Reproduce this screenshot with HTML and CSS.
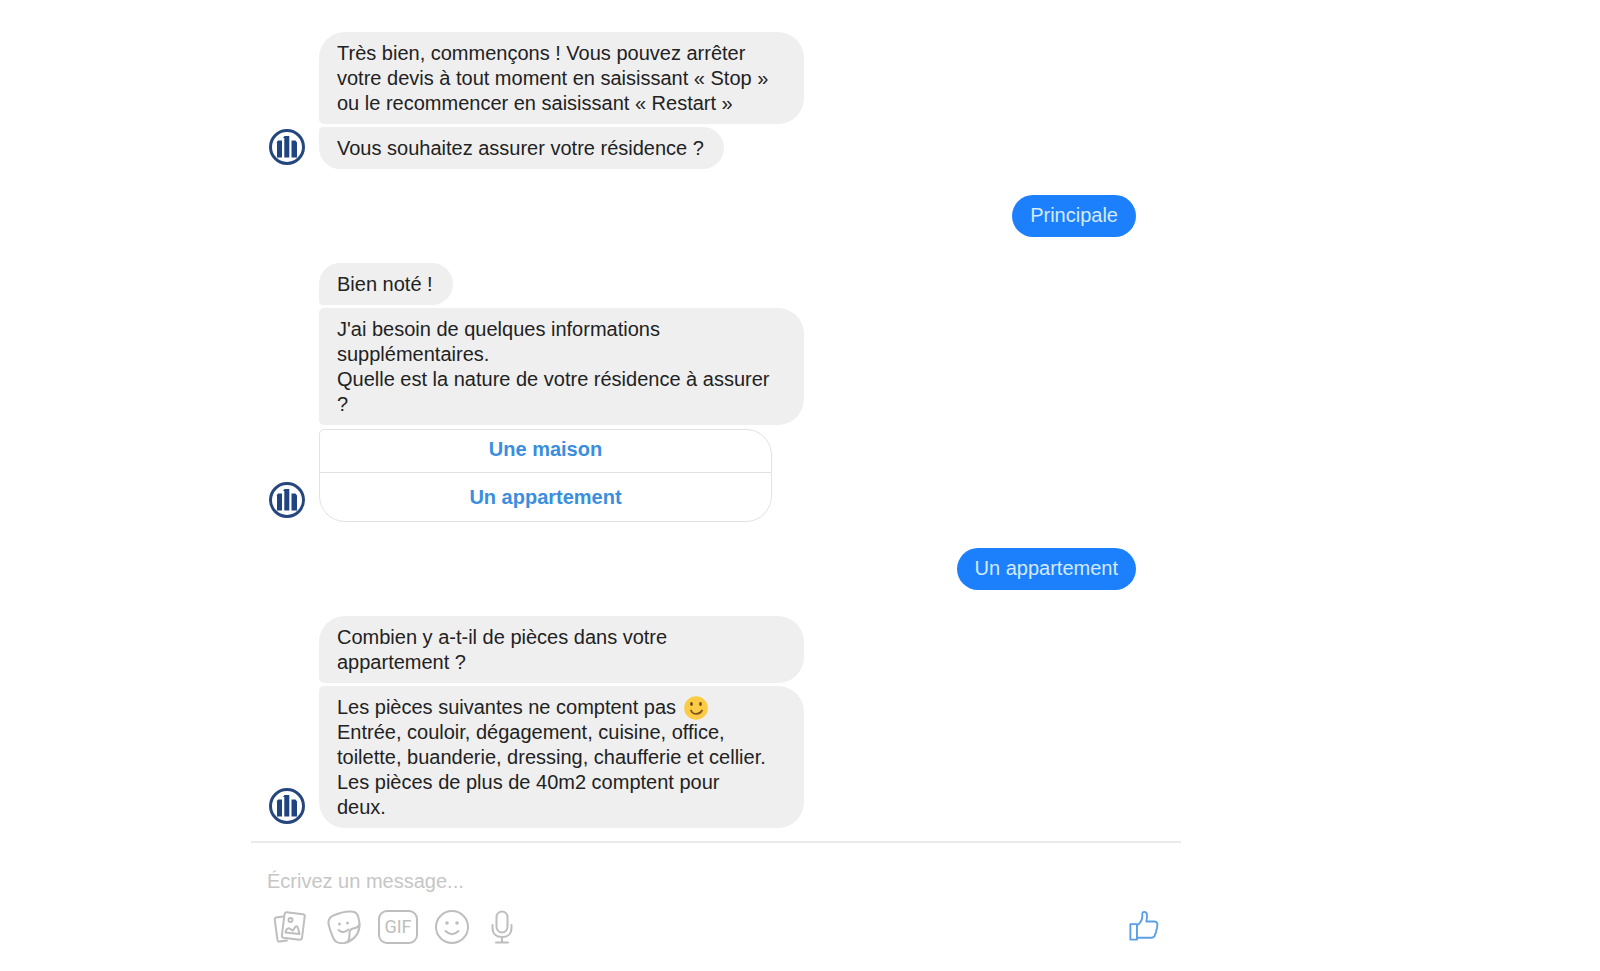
FILE: index.html
```html
<!DOCTYPE html>
<html lang="fr">
<head>
    <meta charset="UTF-8">
    <meta name="viewport" content="width=device-width, initial-scale=1.0">
    <title>Devis habitation</title>
    <link rel="stylesheet" href="styles.css">
</head>
<body>
    <!-- shared avatar, used by each bot group -->
    <svg class="defs" width="0" height="0" aria-hidden="true">
        <symbol id="avatar" viewBox="0 0 36 36">
            <circle cx="18" cy="18" r="16.500" fill="#fff" stroke="#25477d" stroke-width="3"/>
            <path d="M7.500 13.500L9 11.500H13V28.500H8V13.500zM14 9L15.500 7H20.300V28.500H15.300V9zM22.500 11.500H26.500L28 13.500V28.500H22.500z" fill="#1f4482"/>
        </symbol>
    </svg>

    <main class="chat">
        <section class="messages">
            <div class="group">
                <svg class="avatar"><use href="#avatar"/></svg>
                <div class="bubbles">
                    <p class="bubble wide first">Très bien, commençons ! Vous pouvez arrêter<br>votre devis à tout moment en saisissant « Stop »<br>ou le recommencer en saisissant « Restart »</p>
                    <p class="bubble last">Vous souhaitez assurer votre résidence ?</p>
                </div>
            </div>

            <p class="reply">Principale</p>

            <div class="group">
                <svg class="avatar"><use href="#avatar"/></svg>
                <div class="bubbles">
                    <p class="bubble first">Bien noté !</p>
                    <p class="bubble wide">J'ai besoin de quelques informations<br>supplémentaires.<br>Quelle est la nature de votre résidence à assurer<br>?</p>
                    <div class="choices">
                        <button type="button">Une maison</button>
                        <button type="button">Un appartement</button>
                    </div>
                </div>
            </div>

            <p class="reply">Un appartement</p>

            <div class="group">
                <svg class="avatar"><use href="#avatar"/></svg>
                <div class="bubbles">
                    <p class="bubble wide first">Combien y a-t-il de pièces dans votre<br>appartement ?</p>
                    <p class="bubble wide last">Les pièces suivantes ne comptent pas
                        <svg class="emoji" viewBox="0 0 24 24" role="img" aria-label="sourire">
                            <circle cx="12" cy="12" r="11.800" fill="#fccb45"/>
                            <ellipse cx="7.500" cy="8" rx="1.400" ry="2" fill="#6b4a1c"/>
                            <ellipse cx="16.500" cy="8" rx="1.400" ry="2" fill="#6b4a1c"/>
                            <path d="M7 14.500c2 4.500 8.500 4.500 11 0" fill="none" stroke="#7d551c" stroke-width="1.800" stroke-linecap="round"/>
                        </svg><br>Entrée, couloir, dégagement, cuisine, office,<br>toilette, buanderie, dressing, chaufferie et cellier.<br>Les pièces de plus de 40m2 comptent pour<br>deux.</p>
                </div>
            </div>
        </section>

        <form class="composer">
            <input type="text" name="message" placeholder="Écrivez un message..." aria-label="Écrivez un message">
            <div class="toolbar">
                <button type="button" aria-label="Photos">
                    <svg width="34" height="34" viewBox="0 0 34 34">
                        <path d="M10.500 6.500L3 7.500Q1.500 8 1.700 9.500L4.500 30Q5 32 6.800 31.500L14 30.500"/>
                        <path d="M13.500 2.200L30 4.200Q32 4.500 31.700 6.500L29 28Q28.500 30 26.500 29.800L10.500 27.800Q8.600 27.500 8.900 25.500L11.500 4Q12 2 13.500 2.200z"/>
                        <circle cx="17.500" cy="10" r="2"/>
                        <path d="M12.500 22.500L13.500 19.500Q16 17 18 19.500L20 20.500L22.500 16.500Q24 15.500 25 18L26.500 24z"/>
                    </svg>
                </button>
                <button type="button" aria-label="Autocollants">
                    <svg width="34" height="34" viewBox="0 0 34 34">
                        <path d="M7.500 5Q17 1 24.500 1.500C29 1.500 31 4.500 31.700 8.500Q33 14 32.300 18C31 25.500 25 31.500 17.500 33C12 33.500 8.500 33 6.500 28.500Q3 21 1.500 14C1 9 3 6.500 7.500 5z"/>
                        <path d="M21 32Q23 28 22.500 23Q22.500 19.500 26 18.500Q31 18 32.500 14.500"/>
                        <path d="M11.500 20Q16 24.500 21.500 19.500"/>
                        <circle class="dot" cx="12.500" cy="14" r="1.500"/>
                        <circle class="dot" cx="20.500" cy="13" r="1.500"/>
                    </svg>
                </button>
                <button type="button" class="gif"><span>GIF</span></button>
                <button type="button" aria-label="Emoji">
                    <svg width="34" height="34" viewBox="0 0 34 34">
                        <circle cx="17" cy="17" r="16"/>
                        <path d="M10.500 21Q17 27.500 23.500 21"/>
                        <circle class="dot" cx="12" cy="13" r="1.800"/>
                        <circle class="dot" cx="22" cy="13" r="1.800"/>
                    </svg>
                </button>
                <button type="button" class="mic" aria-label="Micro">
                    <svg width="22" height="34" viewBox="0 0 22 34">
                        <rect x="5.500" y="1.500" width="11" height="21" rx="5.500"/>
                        <path d="M1.500 15V18C1.500 24 5.500 27 11 27S20.500 24 20.500 18V15M11 27V32M5 32.500H17"/>
                    </svg>
                </button>
                <button type="button" class="like" aria-label="J'aime">
                    <svg width="32" height="32" viewBox="0 0 34 34">
                        <path d="M2.500 15H9.500V31.500H2.500z"/>
                        <path d="M9.500 16.500C13 14 15 10.500 15.200 7V4C15.200 1.200 19.500 1.200 20 4.500C20.500 7.500 20 10 19.500 12.200H28C31.500 12.200 31.500 15 31 17Q31.500 19 30 21.500Q30.500 24 28.800 25.500Q28.500 29 25.500 29.500H9.500"/>
                    </svg>
                </button>
            </div>
        </form>
    </main>
</body>
</html>
```
FILE: styles.css
```css
* {
    box-sizing: border-box;
}
body {
    margin: 0;
    background-color: #fff;
    color: #222;
    font-family: "Liberation Sans", Helvetica, Arial, sans-serif;
    font-size: 20px;
    line-height: 25px;
}
p {
    margin: 0;
}
button {
    padding: 0;
    border: none;
    background: none;
    font: inherit;
    cursor: pointer;
}
.defs {
    display: block;
}
.chat {
    max-width: 930px;
    margin-left: 251px;
}
.messages {
    display: flex;
    flex-direction: column;
    gap: 26px;
    padding: 32px 45px 13px 18px;
}
.group {
    display: flex;
    align-items: flex-end;
    gap: 14px;
}
.avatar {
    flex: none;
    width: 36px;
    height: 36px;
    margin-bottom: 4px;
}
.bubbles {
    display: flex;
    flex-direction: column;
    align-items: flex-start;
    gap: 3px;
    width: 485px;
}
.bubble {
    padding: 9px 20px 8px 18px;
    border-radius: 5px 26px 26px 5px;
    background-color: #efefef;
}
.bubble.wide {
    width: 100%;
}
.bubble.first {
    border-top-left-radius: 26px;
}
.bubble.last {
    border-bottom-left-radius: 26px;
}
.emoji {
    width: 24px;
    height: 24px;
    margin-top: -4px;
    margin-left: 2px;
    vertical-align: -6px;
}
.choices {
    display: flex;
    flex-direction: column;
    width: 453px;
    max-width: 100%;
    margin-top: 1px;
    border: 1px solid #e2e2e2;
    border-radius: 5px 26px 26px 26px;
}
.choices button {
    height: 48px;
    color: #3a8ee0;
    font-weight: bold;
}
.choices button:first-child {
    height: 43px;
    padding-bottom: 4px;
    border-bottom: 1px solid #e2e2e2;
}
.reply {
    align-self: flex-end;
    padding: 8px 18px 9px;
    border-radius: 21px;
    background-color: #1c80fc;
    color: #d3eaff;
}
.composer {
    padding: 22px 20px 0 16px;
    border-top: 2px solid #ebebeb;
}
.composer input {
    display: block;
    width: 100%;
    height: 32px;
    padding: 0;
    border: none;
    outline: none;
    font: inherit;
}
.composer input::placeholder {
    color: #c6c6c6;
    opacity: 1;
}
.toolbar {
    display: flex;
    gap: 12px;
    margin-top: 13px;
    padding-left: 2px;
}
.toolbar button {
    display: flex;
    justify-content: center;
    width: 42px;
    height: 34px;
    color: #bebebe;
}
.toolbar svg {
    fill: none;
    stroke: currentColor;
    stroke-width: 2;
    stroke-linecap: round;
    stroke-linejoin: round;
}
.toolbar .dot {
    fill: currentColor;
    stroke: none;
}
.gif span {
    width: 40px;
    height: 34px;
    border: 2px solid currentColor;
    border-radius: 9px;
    font-family: Roboto, sans-serif;
    font-size: 18px;
    line-height: 30px;
    text-align: center;
}
.toolbar .mic {
    width: 34px;
}
.toolbar .like {
    width: 34px;
    margin-left: auto;
    color: #5c9fe4;
}
```
